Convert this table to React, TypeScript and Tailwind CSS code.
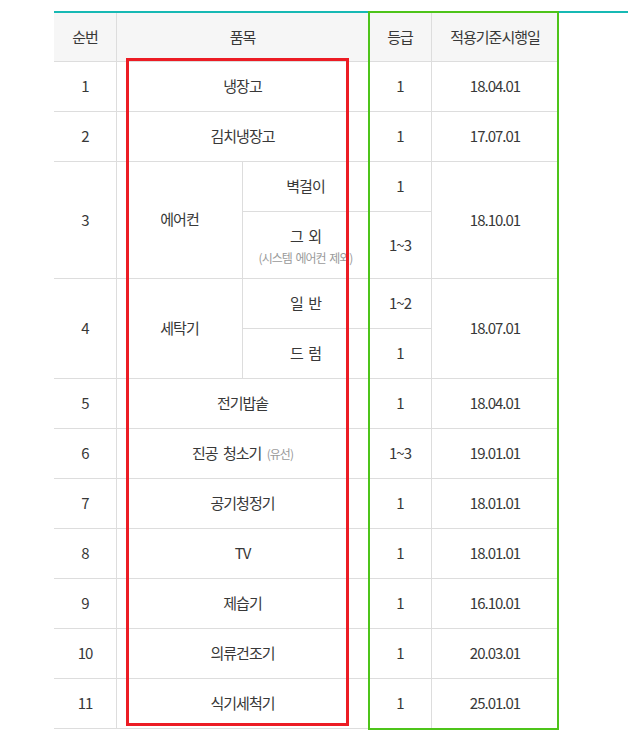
import type { ReactNode } from "react";

const cell =
  "flex items-center justify-center border-b border-r border-[#dddddd] text-center";

function C({ children, className = "" }: { children?: ReactNode; className?: string }) {
  return <div className={`${cell} ${className}`}>{children}</div>;
}

function Small({ children }: { children: ReactNode }) {
  return <span className="text-[12px] text-[#9a9a9a] tracking-[-1px] [word-spacing:2px]">{children}</span>;
}

const simpleRows: [string, ReactNode, string, string][] = [
  ["5", "전기밥솥", "1", "18.04.01"],
  [
    "6",
    <span>
      진공 청소기 <Small>(유선)</Small>
    </span>,
    "1~3",
    "19.01.01",
  ],
  ["7", "공기청정기", "1", "18.01.01"],
  ["8", "TV", "1", "18.01.01"],
  ["9", "제습기", "1", "16.10.01"],
  ["10", "의류건조기", "1", "20.03.01"],
  ["11", "식기세척기", "1", "25.01.01"],
];

export default function App() {
  return (
    <div
      className="min-h-[744px] bg-white pt-[11px] text-[15px] text-[#383838] tracking-[-1px] [word-spacing:3px]"
      style={{ fontFamily: '"Noto Sans CJK KR", "Noto Sans", sans-serif' }}
    >
      <div className="relative ml-[54px] border-t-2 border-[#17b9b4]">
        <div className="grid w-[504px] grid-cols-[63px_126px_126px_63px_126px] grid-rows-[49px_50px_50px_50px_67px_50px_50px_50px_50px_50px_50px_50px_50px_50px]">
          {/* header */}
          <C className="bg-[#f6f6f6]">순번</C>
          <C className="col-span-2 bg-[#f6f6f6]">품목</C>
          <C className="bg-[#f6f6f6]">등급</C>
          <C className="bg-[#f6f6f6] border-r-0">적용기준시행일</C>

          <C>1</C>
          <C className="col-span-2">냉장고</C>
          <C>1</C>
          <C className="border-r-0">18.04.01</C>

          <C>2</C>
          <C className="col-span-2">김치냉장고</C>
          <C>1</C>
          <C className="border-r-0">17.07.01</C>

          {/* 에어컨 */}
          <C className="row-span-2">3</C>
          <C className="row-span-2 pb-[2px]">에어컨</C>
          <C>벽걸이</C>
          <C>1</C>
          <C className="row-span-2 border-r-0">18.10.01</C>
          <div className={`${cell} flex-col gap-[1px] pt-[2px]`}>
            <span>그 외</span>
            <Small>(시스템 에어컨 제외)</Small>
          </div>
          <C>1~3</C>

          {/* 세탁기 */}
          <C className="row-span-2">4</C>
          <C className="row-span-2">세탁기</C>
          <C>일 반</C>
          <C>1~2</C>
          <C className="row-span-2 border-r-0">18.07.01</C>
          <C>드 럼</C>
          <C>1</C>

          {simpleRows.map(([no, name, grade, date]) => (
            <div key={no} className="contents">
              <C>{no}</C>
              <C className="col-span-2">{name}</C>
              <C>{grade}</C>
              <C className="border-r-0">{date}</C>
            </div>
          ))}
        </div>

        {/* annotation boxes */}
        <div className="pointer-events-none absolute left-[72px] top-[45px] h-[668px] w-[223px] border-[3px] border-[#ec1c24]" />
        <div className="pointer-events-none absolute left-[314px] top-[-2px] h-[719px] w-[191px] border-2 border-[#4ec41a]" />
      </div>
    </div>
  );
}
